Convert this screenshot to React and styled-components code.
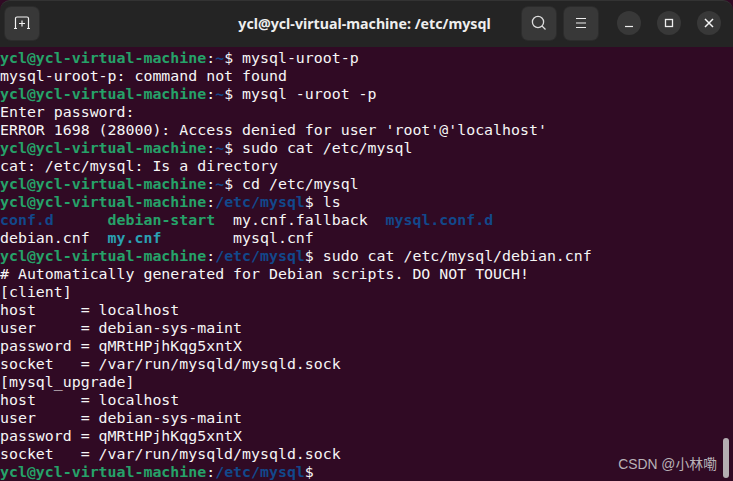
import React from "react";
import styled, { createGlobalStyle } from "styled-components";

const GlobalStyle = createGlobalStyle`
  html, body {
    margin: 0;
    padding: 0;
    background: #300a24;
  }
`;

const Window = styled.div`
  position: relative;
  width: 733px;
  height: 481px;
  overflow: hidden;
  display: flex;
  flex-direction: column;
  background: #300a24;
`;

const TitleBar = styled.header`
  flex: 0 0 47px;
  box-sizing: border-box;
  display: flex;
  align-items: center;
  padding: 0 12px 2px 5px;
  background: #242424;
  border-top: 1px solid #333333;
  border-radius: 10px 10px 0 0;
`;

const Title = styled.div`
  flex: 1;
  text-align: center;
  padding-left: 168px;
  color: #eeeeee;
  font-family: "Noto Sans", "Liberation Sans", sans-serif;
  font-weight: 700;
  font-size: 14.2px;
`;

const HeaderButton = styled.button`
  width: 34px;
  height: 33px;
  padding: 0;
  margin-left: ${(props) => props.$gap || 0}px;
  display: flex;
  align-items: center;
  justify-content: center;
  border: none;
  border-radius: 6px;
  background: #383838;
  box-shadow: 0 0 0 1px #2c2c2c;
`;

const RoundButton = styled(HeaderButton)`
  width: 24px;
  height: 24px;
  border-radius: 50%;
  box-shadow: none;
`;

const Terminal = styled.pre`
  flex: 1;
  margin: 0;
  padding: 2px 0 0;
  font-family: "DejaVu Sans Mono", "Liberation Mono", monospace;
  font-size: 14.9px;
  line-height: 18px;
  color: #f6f6f6;
  overflow: hidden;
`;

const Prompt = styled.span`
  color: #26a269;
  font-weight: 700;
`;

const PathText = styled.span`
  color: #12488b;
  font-weight: 700;
`;

const Cyan = styled.span`
  font-weight: 700;
  color: #2aa1b3;
`;

const Scrollbar = styled.div`
  position: absolute;
  right: 4px;
  bottom: 3px;
  width: 6px;
  height: 40px;
  border-radius: 3px;
  background: #b4aeb2;
`;

const Watermark = styled.div`
  position: absolute;
  right: 16px;
  bottom: 8px;
  font-family: "Liberation Sans", "Noto Sans CJK SC", sans-serif;
  font-size: 13.86px;
  color: #b9b2b7;
`;

const PromptLine = ({ path = "~", cmd }) => (
  <>
    <Prompt>ycl@ycl-virtual-machine</Prompt>:<PathText>{path}</PathText>$ {cmd}
    {"\n"}
  </>
);

const MYSQL = "/etc/mysql";

const ConfBlock = () =>
  `host     = localhost
user     = debian-sys-maint
password = qMRtHPjhKqg5xntX
socket   = /var/run/mysqld/mysqld.sock
`;

export default function App() {
  return (
    <>
      <GlobalStyle />
      <Window>
        <TitleBar>
          <HeaderButton>
            <svg width="16" height="14" viewBox="0 0 16 14" fill="none" stroke="#f2f2f2" strokeWidth="1.2">
              <path d="M1.5 12V2.5a1.5 1.5 0 0 1 1.5-1.5h10a1.5 1.5 0 0 1 1.5 1.5V12" />
              <path d="M0 12.5h3M13 12.5h3M8 4.500v6M5 7.500h6" />
            </svg>
          </HeaderButton>
          <Title>ycl@ycl-virtual-machine: /etc/mysql</Title>
          <HeaderButton>
            <svg width="16" height="16" viewBox="0 0 16 16" fill="none" stroke="#dddddd" strokeWidth="1.3">
              <circle cx="7" cy="7" r="5.6" />
              <path d="M11 11l3.500 3.500" />
            </svg>
          </HeaderButton>
          <HeaderButton $gap={8}>
            <svg width="12" height="12" viewBox="0 0 12 12" fill="none" stroke="#eeeeee" strokeWidth="1">
              <path d="M1 1.500h10M1 6h10M1 10.500h10" />
            </svg>
          </HeaderButton>
          <RoundButton $gap={19}>
            <svg width="10" height="10" viewBox="0 0 10 10" fill="none" stroke="#eeeeee" strokeWidth="1.2">
              <path d="M1 8.500h8" />
            </svg>
          </RoundButton>
          <RoundButton $gap={16}>
            <svg width="10" height="10" viewBox="0 0 10 10" fill="none" stroke="#eeeeee" strokeWidth="1.3">
              <rect x="1.500" y="1.500" width="7" height="7" />
            </svg>
          </RoundButton>
          <RoundButton $gap={16}>
            <svg width="10" height="10" viewBox="0 0 10 10" fill="none" stroke="#f4f4f4" strokeWidth="1.5">
              <path d="M1 1l8 8M9 1l-8 8" />
            </svg>
          </RoundButton>
        </TitleBar>
        <Terminal>
          <PromptLine cmd="mysql-uroot-p" />
          {"mysql-uroot-p: command not found\n"}
          <PromptLine cmd="mysql -uroot -p" />
          {"Enter password:\nERROR 1698 (28000): Access denied for user 'root'@'localhost'\n"}
          <PromptLine cmd="sudo cat /etc/mysql" />
          {"cat: /etc/mysql: Is a directory\n"}
          <PromptLine cmd="cd /etc/mysql" />
          <PromptLine path={MYSQL} cmd="ls" />
          <PathText>conf.d</PathText>
          {"      "}
          <Prompt>debian-start</Prompt>
          {"  my.cnf.fallback  "}
          <PathText>mysql.conf.d</PathText>
          {"\ndebian.cnf  "}
          <Cyan>my.cnf</Cyan>
          {"        mysql.cnf\n"}
          <PromptLine path={MYSQL} cmd="sudo cat /etc/mysql/debian.cnf" />
          {"# Automatically generated for Debian scripts. DO NOT TOUCH!\n[client]\n"}
          {ConfBlock()}
          {"[mysql_upgrade]\n"}
          {ConfBlock()}
          <PromptLine path={MYSQL} cmd="" />
        </Terminal>
        <Scrollbar />
        <Watermark>CSDN @小林嘞</Watermark>
      </Window>
    </>
  );
}
